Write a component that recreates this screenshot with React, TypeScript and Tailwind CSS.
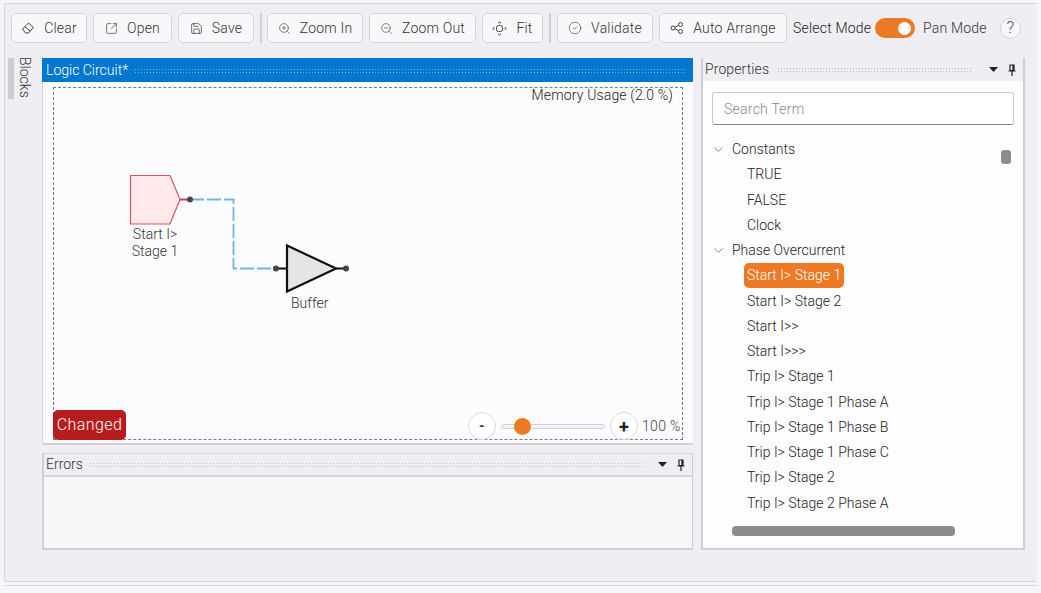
import React from "react";
import { ChevronDown, CircleCheck, Save, SquareArrowOutUpRight, ZoomIn, ZoomOut } from "lucide-react";

const font = "font-['Roboto','Liberation_Sans',sans-serif]";

function EraserIcon() {
  return (
    <svg width="14" height="14" viewBox="0 0 14 14" fill="none" stroke="#444" strokeWidth="1">
      <path d="M1.5 8 L7.5 2 L12.5 6.5 L7.5 12 H4.5 Z" />
      <path d="M3.8 5.8 L9 10" />
    </svg>
  );
}

function FitIcon() {
  return (
    <svg width="15" height="15" viewBox="0 0 15 15" fill="none" stroke="#444" strokeWidth="1">
      <rect x="4.5" y="4.5" width="6" height="6" rx="2" />
      <path d="M6 2.2 L7.5 1 L9 2.2 M6 12.8 L7.5 14 L9 12.8 M2.2 6 L1 7.5 L2.2 9 M12.8 6 L14 7.5 L12.8 9" />
    </svg>
  );
}

function ArrangeIcon() {
  return (
    <svg width="14" height="14" viewBox="0 0 14 14" fill="none" stroke="#444" strokeWidth="1">
      <circle cx="3" cy="7" r="2" />
      <circle cx="10.5" cy="3.5" r="2" />
      <circle cx="10.5" cy="10.5" r="2" />
      <path d="M5 6.3 L8.6 4.3 M5 7.7 L8.6 9.7" />
    </svg>
  );
}

function ToolButton({ icon, label, w, gap = "gap-[9px]" }: { icon: React.ReactNode; label: string; w: string; gap?: string }) {
  return (
    <button className={`${w} ${gap} h-[30px] shrink-0 flex items-center justify-center rounded-[5px] border border-[#d4d4da] bg-[#f8f8fa] text-[14px] font-light tracking-[0.2px] text-[#333]`}>
      {icon}
      <span>{label}</span>
    </button>
  );
}

function Sep({ tight = false }: { tight?: boolean }) {
  return <div className={`w-[2px] h-[30px] bg-[#d0d0d6] shrink-0 ${tight ? "-mr-px" : ""}`} />;
}

function Grip({ color = "#b9b9c0" }: { color?: string }) {
  return (
    <div
      className="flex-1 h-[5px] bg-[length:3px_3px]"
      style={{ backgroundImage: `radial-gradient(${color} 0.7px, transparent 0.8px)` }}
    />
  );
}

function PanelTools() {
  return (
    <div className="flex items-center gap-[10px] pl-[8px] pr-[7px]">
      <svg width="9" height="5" viewBox="0 0 9 5"><path d="M0 0 H9 L4.5 5 Z" fill="#222" /></svg>
      <svg width="8" height="12" viewBox="0 0 8 12" fill="none" stroke="#222" strokeWidth="1.2">
        <path d="M2 1 H6 V6.5 H2 Z M5 1 V6.5 M0.5 7 H7.5 M4 7 V12" />
      </svg>
    </div>
  );
}

const groups: { title: string; items: string[] }[] = [
  { title: "Constants", items: ["TRUE", "FALSE", "Clock"] },
  {
    title: "Phase Overcurrent",
    items: [
      "Start I> Stage 1",
      "Start I> Stage 2",
      "Start I>>",
      "Start I>>>",
      "Trip I> Stage 1",
      "Trip I> Stage 1 Phase A",
      "Trip I> Stage 1 Phase B",
      "Trip I> Stage 1 Phase C",
      "Trip I> Stage 2",
      "Trip I> Stage 2 Phase A",
      "Trip I> Stage 2 Phase B",
    ],
  },
];

function Circuit() {
  return (
    <svg className="absolute left-[75px] top-[86px]" width="230" height="130" viewBox="0 0 230 130" fill="none">
      <path d="M1.5 1.5 H41 L51 25.5 L41 50 H1.5 Z" fill="#ffe9ea" stroke="#d6555c" strokeWidth="1.2" />
      <path d="M51 25.5 H61" stroke="#c2464c" strokeWidth="2" />
      <path d="M61 25.5 H104.5 V94.5 H147" stroke="#6db6ea" strokeWidth="1.8" strokeDasharray="14 3" />
      <circle cx="61" cy="25.5" r="3" fill="#3f4a55" />
      <path d="M147 94.5 H158" stroke="#111" strokeWidth="2" />
      <path d="M158 71.5 L207 94.5 L158 117.5 Z" fill="#e5e5e5" stroke="#111" strokeWidth="2.2" />
      <path d="M207 94.5 H217" stroke="#111" strokeWidth="2" />
      <circle cx="147" cy="94.5" r="3" fill="#444" />
      <circle cx="217" cy="94.5" r="3" fill="#444" />
    </svg>
  );
}

export default function App() {
  return (
    <div className={`${font} w-[1041px] h-[593px] overflow-hidden bg-[#f6f6f8] pt-[3px] pl-[4px] pr-[4px] flex flex-col`}>
      <div className="h-[579px] shrink-0 border border-[#d6d6da] border-r-[#f2f2f5] bg-[#eeeef3] flex flex-col">
        <div className="h-[54px] shrink-0 flex items-start pt-[9px] pl-[6px] gap-[6px]">
          <ToolButton icon={<EraserIcon />} label="Clear" w="w-[76px]" />
          <ToolButton icon={<SquareArrowOutUpRight size={13} strokeWidth={1.3} color="#444" />} label="Open" w="w-[79px]" />
          <ToolButton icon={<Save size={13} strokeWidth={1.4} color="#444" />} label="Save" w="w-[76px]" />
          <Sep tight />
          <ToolButton icon={<ZoomIn size={13} strokeWidth={1.2} color="#444" />} label="Zoom In" w="w-[96px]" />
          <ToolButton icon={<ZoomOut size={13} strokeWidth={1.2} color="#444" />} label="Zoom Out" w="w-[107px]" />
          <ToolButton icon={<FitIcon />} label="Fit" w="w-[61px]" />
          <Sep />
          <ToolButton icon={<CircleCheck size={14} strokeWidth={1.1} color="#444" />} label="Validate" w="w-[96px]" />
          <ToolButton icon={<ArrangeIcon />} label="Auto Arrange" w="w-[128px]" />
          <div className="flex items-center h-[30px] text-[14px] font-light tracking-[0.2px] text-[#222]">
            <span className="w-[82px]">Select Mode</span>
            <div className="w-[40px] h-[20px] rounded-full bg-[#ec7a24] flex items-center justify-end pr-[4px]">
              <div className="w-[13px] h-[13px] rounded-full bg-white" />
            </div>
            <span className="ml-[8px] w-[77px] text-[#333]">Pan Mode</span>
            <div className="w-[21px] h-[21px] rounded-full border border-[#d2d2d8] bg-[#f8f8fa] flex items-center justify-center text-[17px] font-light text-[#555]">?</div>
          </div>
        </div>

        <div className="flex flex-1 min-h-0">
          <div className="w-[37px] shrink-0 flex pl-[3px]">
            <div className="w-[6px] h-[41px] bg-[#ccccd6]" />
            <div className="ml-[5px] -mt-[1px] h-[43px] [writing-mode:vertical-rl] text-[14px] font-light text-[#333] leading-[12px]">Blocks</div>
          </div>

          <div className="w-[651px] shrink-0 flex flex-col">
            <div className="h-[387px] shrink-0 flex flex-col border-b-[2px] border-[#d2d2d8] bg-white">
              <div className="h-[24px] shrink-0 bg-[#0078d0] flex items-center pl-[4px] pr-[8px] gap-[6px] text-[14px] font-light text-white">
                <span>Logic Circuit*</span>
                <Grip color="#7db8e6" />
              </div>
              <div className="flex-1 bg-[#fcfcff] border-l border-[#d2d2d8] pl-[10px] pr-[10px] pt-[5px] pb-[3px]">
                <div className="relative h-full border border-dashed border-[#7c7c7c] flex flex-col justify-between">
                  <div className="-mt-px text-right text-[14px] font-light tracking-[0.15px] text-[#222] leading-[16px] pr-[9px]">Memory Usage (2.0 %)</div>
                  <div className="flex items-end justify-between h-[30px] -mb-px -ml-px">
                    <div className="w-[73px] h-[30px] rounded-[5px] bg-[#b71c1c] text-white text-[16px] font-light tracking-[0.4px] flex items-center justify-center">Changed</div>
                    <div className="flex items-center text-[14px] font-light tracking-[0.3px] text-[#444] h-[28px]">
                      <button className="w-[28px] h-[28px] rounded-full border border-[#d8d8de] bg-white text-[#333] font-bold flex items-center justify-center text-[14px]">-</button>
                      <div className="relative w-[104px] h-[5px] rounded-full border border-[#d0d0d6] bg-[#f4f4f6] ml-[5px]">
                        <div className="absolute left-[12px] -top-[7px] w-[17px] h-[17px] rounded-full bg-[#ec7a24]" />
                      </div>
                      <button className="w-[28px] h-[28px] rounded-full border border-[#d8d8de] bg-white text-[#222] font-bold flex items-center justify-center text-[18px] ml-[5px]">+</button>
                      <span className="w-[44px] pl-[4px] whitespace-nowrap">100 %</span>
                    </div>
                  </div>
                  <div className="absolute left-[76px] top-[138px] w-[50px] text-center text-[14px] font-light leading-[17px] text-[#333]">Start I&gt; Stage 1</div>
                  <div className="absolute left-[237px] top-[207px] text-[14px] font-light leading-[17px] text-[#333]">Buffer</div>
                  <Circuit />
                </div>
              </div>
            </div>
            <div className="h-[8px] shrink-0" />
            <div className="h-[97px] shrink-0 border-2 border-t-0 border-[#cfcfd6] border-r-[1px] flex flex-col bg-[#f6f6f7]">
              <div className="h-[24px] shrink-0 bg-[#eeeef3] border-t border-b-2 border-[#d4d4da] flex items-center pl-[2px] text-[14px] font-light text-[#333] gap-[6px]">
                <span>Errors</span>
                <Grip />
                <PanelTools />
              </div>
            </div>
          </div>

          <div className="w-[8px] shrink-0" />

          <div className="w-[324px] h-[492px] shrink-0 flex flex-col border-x-2 border-b-2 border-[#cfcfd6]">
            <div className="h-[23px] shrink-0 flex items-center pl-[2px] text-[14px] font-light tracking-[0.1px] text-[#333] gap-[8px] bg-[#eeeef3]">
              <span>Properties</span>
              <Grip />
              <PanelTools />
            </div>
            <div className="relative flex-1 min-h-0 bg-[#fdfdff] rounded-t-[3px] overflow-hidden pl-[9px] pr-[9px] pt-[11px]">
              <div className="h-[33px] rounded-[3px] border border-[#c8c8cc] border-b-[#888] bg-white flex items-center pl-[11px] pt-[2px] text-[14px] font-light tracking-[0.25px] text-[#888]">Search Term</div>
              <div className="mt-[12px] h-[384px] overflow-hidden text-[14px] font-light text-[#222]">
                {groups.map((g) => (
                  <div key={g.title}>
                    <div className="h-[25.25px] flex items-center gap-[6px] -ml-[1px]">
                      <ChevronDown size={15} strokeWidth={1} color="#444" />
                      <span>{g.title}</span>
                    </div>
                    {g.items.map((it) => (
                      <div key={it} className="h-[25.25px] flex items-center pl-[35px]">
                        <span className={it === "Start I> Stage 1" ? "bg-[#ec7a24] text-white rounded-[5px] -ml-[3px] px-[3px] h-[25px] flex items-center" : ""}>{it}</span>
                      </div>
                    ))}
                  </div>
                ))}
              </div>
              <div className="absolute right-[12px] top-[69px] w-[10px] h-[14px] rounded-[3px] bg-[#8c8c8c]" />
              <div className="absolute left-[29px] bottom-[12px] w-[223px] h-[10px] rounded-[4px] bg-[#8c8c8c]" />
            </div>
          </div>
        </div>
      </div>
      <div className="h-[3px] shrink-0" />
      <div className="flex-1 border-t border-[#d6d6da]" />
    </div>
  );
}
